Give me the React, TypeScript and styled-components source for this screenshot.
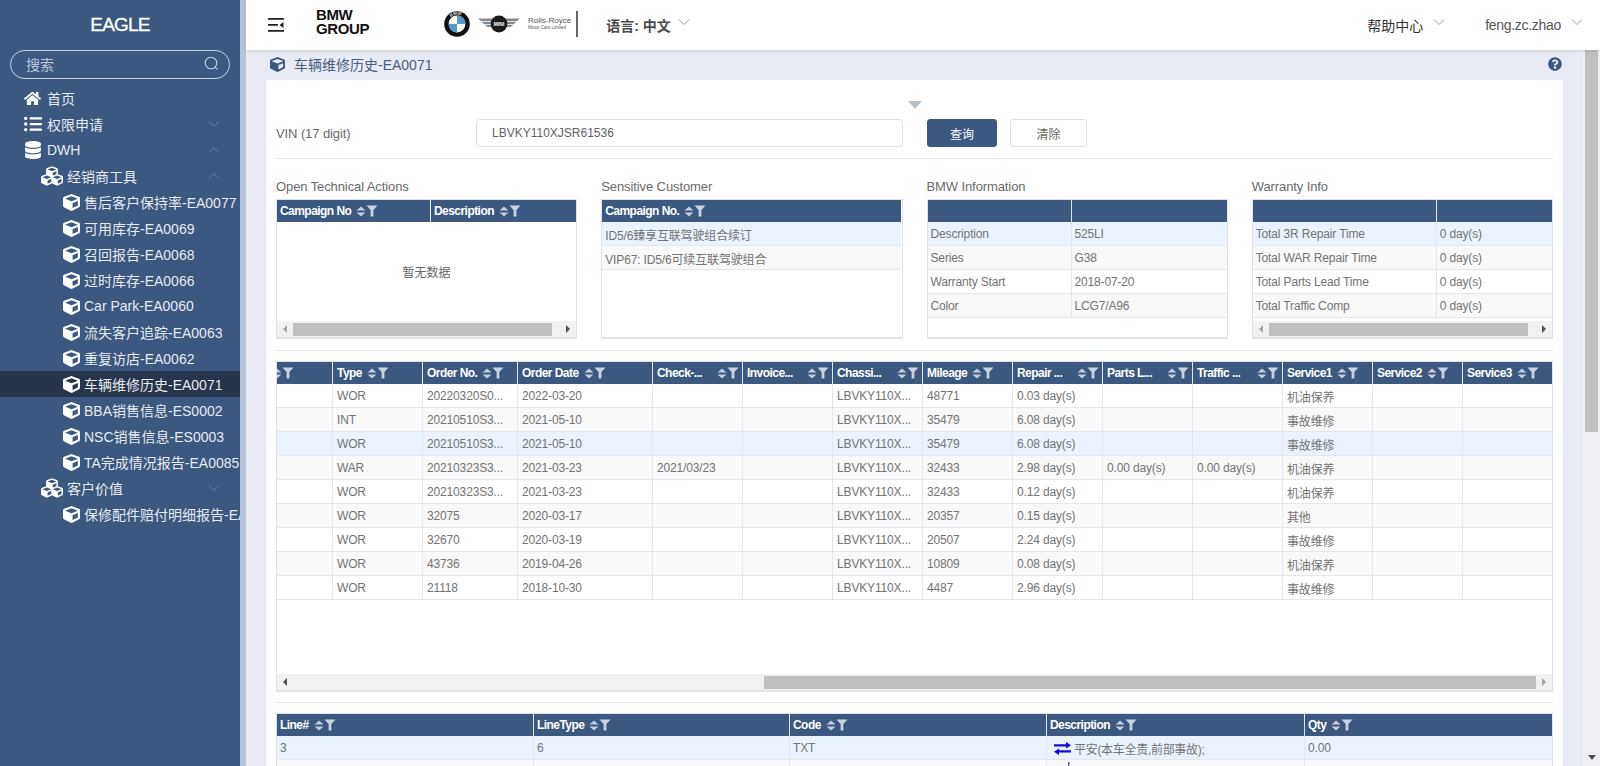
import React from "react";
import styled, { createGlobalStyle } from "styled-components";
import { FaCube, FaCubes, FaDatabase, FaHome, FaListUl, FaQuestionCircle } from "react-icons/fa";

const GlobalStyle = createGlobalStyle`
  * { box-sizing: border-box; }
  html, body { margin: 0; padding: 0; height: 100%; overflow: hidden; }
  body {
    font-family: "Liberation Sans", "Noto Sans CJK SC", sans-serif;
    font-size: 12px;
    color: #666;
  }
`;

const Page = styled.div`
  display: flex;
  width: 1600px;
  height: 766px;
  overflow: hidden;
  background: #e8ebf3;
`;

/* Sidebar */
const Sidebar = styled.aside`
  flex: 0 0 246px;
  height: 100%;
  background: #3c5780;
  border-right: 6px solid #b6c2d5;
  overflow: hidden;
`;

const Logo = styled.div`
  height: 50px;
  display: flex;
  align-items: center;
  justify-content: center;
  color: #fff;
  font-size: 19px;
  letter-spacing: -0.8px;
  -webkit-text-stroke: 0.3px #fff;
`;

const SearchBox = styled.div`
  display: flex;
  align-items: center;
  justify-content: space-between;
  height: 29px;
  margin: 0 10px 6px;
  padding: 0 10px 2px 15px;
  border: 1px solid #c8d1de;
  border-radius: 15px;
  color: #bcc7d8;
  font-size: 14px;
`;

const MenuRow = styled.div<{ $level: number; $active?: boolean }>`
  display: flex;
  align-items: center;
  height: 26px;
  padding-left: ${(p) => [24, 41, 63][p.$level]}px;
  background: ${(p) => (p.$active ? "#28344a" : "transparent")};
  color: #e6eaf1;
  font-size: 14px;
  white-space: nowrap;
  position: relative;
`;

const MenuIcon = styled.span<{ $level: number }>`
  flex: 0 0 ${(p) => [23, 26, 21][p.$level]}px;
  display: flex;
  align-items: center;
  color: #fff;
`;

const MenuCaret = styled.svg`
  position: absolute;
  left: 208px;
  top: 9px;
  width: 12px;
  height: 8px;
  fill: none;
  stroke: #6d84a6;
`;

/* Main column */
const Main = styled.div`
  flex: 1;
  min-width: 0;
  display: flex;
  flex-direction: column;
`;

const Header = styled.header`
  flex: 0 0 50px;
  display: flex;
  align-items: center;
  padding: 0 17px 0 22px;
  background: #fff;
  box-shadow: 0 1px 4px rgba(0, 0, 0, 0.12);
  position: relative;
  z-index: 1;
  color: #555;
  font-size: 14px;
`;

const GroupMark = styled.div`
  margin: -6px 0 0 32px;
  color: #111;
  font-size: 15px;
  font-weight: 700;
  line-height: 14px;
  letter-spacing: -0.4px;
`;

const Brands = styled.div`
  display: flex;
  align-items: center;
  gap: 8px;
  margin-left: 75px;
  margin-top: -3px;
`;

const Rolls = styled.div`
  color: #555;
  font-size: 8px;
  line-height: 7px;
  white-space: nowrap;
  small {
    display: block;
    font-size: 4.5px;
  }
`;

const BrandBar = styled.div`
  width: 2px;
  height: 26px;
  margin: -3px 0 0 5px;
  background: #666;
`;

const HeadItem = styled.div<{ $strong?: boolean; $left: number }>`
  display: flex;
  align-items: center;
  margin-left: ${(p) => p.$left}px;
  font-weight: ${(p) => (p.$strong ? 700 : 400)};
  color: ${(p) => (p.$strong ? "#4a4a4a" : "#555")};
  svg {
    width: 12px;
    height: 8px;
    margin: -6px 0 0 ${(p) => (p.$strong ? 7 : 10)}px;
    fill: none;
    stroke: #999;
  }
`;

const HelpItem = styled(HeadItem)`
  font-weight: 400;
  color: #333;
`;

const UserItem = styled(HeadItem)`
  letter-spacing: -0.3px;
`;

const Spacer = styled.div`
  flex: 1;
`;

const Body = styled.div`
  flex: 1;
  min-height: 0;
  display: flex;
`;

const Content = styled.div`
  flex: 1;
  min-width: 0;
  padding: 0 20px;
`;

const Crumb = styled.div`
  display: flex;
  align-items: center;
  height: 30px;
  padding: 0 0 2px 4px;
  color: #4a5d80;
  font-size: 14px;
  gap: 9px;
  svg {
    color: #3c5780;
  }
`;

const Help = styled.span`
  margin-left: auto;
  margin-right: 1px;
  display: flex;
  svg {
    color: #3c5780;
  }
`;

const Rail = styled.div`
  flex: 0 0 17px;
  display: flex;
  flex-direction: column;
  align-items: center;
  padding-bottom: 6px;
  background: #eef0f4;
`;

const RailThumb = styled.div`
  width: 13px;
  height: 382px;
  background: #bfbfbf;
`;

const RailArrow = styled.div`
  margin-top: auto;
  border-left: 4px solid transparent;
  border-right: 4px solid transparent;
  border-top: 5px solid #505050;
`;

const Card = styled.div`
  height: 700px;
  padding: 0 10px;
  background: #fff;
  overflow: hidden;
`;

const Toggle = styled.div`
  height: 39px;
  display: flex;
  justify-content: center;
  padding-top: 21px;
`;

const ToggleMark = styled.div`
  width: 0;
  height: 0;
  border-left: 7px solid transparent;
  border-right: 7px solid transparent;
  border-top: 8px solid #b8bfca;
`;

const FormRow = styled.div`
  display: flex;
  align-items: center;
  height: 28px;
`;

const FormLabel = styled.label`
  flex: 0 0 200px;
  font-size: 13px;
  letter-spacing: -0.1px;
  color: #6a6a6a;
`;

const VinInput = styled.div`
  flex: 0 0 427px;
  height: 28px;
  display: flex;
  align-items: center;
  padding-left: 15px;
  border: 1px solid #dcdfe6;
  border-radius: 4px;
  color: #606266;
`;

const Btn = styled.button<{ $primary?: boolean }>`
  width: ${(p) => (p.$primary ? 70 : 77)}px;
  height: 28px;
  margin-left: ${(p) => (p.$primary ? 24 : 13)}px;
  padding: 0;
  border: 1px solid ${(p) => (p.$primary ? "#3c5780" : "#dcdfe6")};
  border-radius: 3px;
  background: ${(p) => (p.$primary ? "#3c5780" : "#fff")};
  color: ${(p) => (p.$primary ? "#fff" : "#666")};
  font: inherit;
`;

const Divider = styled.div<{ $top: number; $bottom: number }>`
  height: 1px;
  margin: ${(p) => p.$top}px 0 ${(p) => p.$bottom}px;
  background: #e4e6ea;
`;

const PanelGrid = styled.div`
  display: grid;
  grid-template-columns: repeat(4, 301.25px);
  column-gap: 24px;
`;

const PanelTitle = styled.div`
  height: 16px;
  margin-bottom: 4px;
  line-height: 16px;
  font-size: 13px;
  letter-spacing: -0.1px;
  color: #6a6a6a;
`;

const Frame = styled.div<{ $height: number }>`
  display: flex;
  flex-direction: column;
  height: ${(p) => p.$height}px;
  border: 1px solid #dfe3ea;
  border-bottom-width: 2px;
  overflow: hidden;
`;

const FrameBody = styled.div`
  flex: 1;
  min-height: 0;
  overflow: hidden;
`;

const Empty = styled.div`
  flex: 1;
  display: flex;
  align-items: center;
  justify-content: center;
  color: #666;
`;

const Grid = styled.table<{ $width: number; $offset?: number; $pad?: number }>`
  width: ${(p) => p.$width}px;
  margin-left: ${(p) => p.$offset || 0}px;
  table-layout: fixed;
  border-collapse: separate;
  border-spacing: 0;
  & th,
  & td {
    padding-left: ${(p) => p.$pad || 3}px;
  }
`;

const Th = styled.th`
  height: 22px;
  padding: 0 3px;
  background: #3c5780;
  border-left: 1px solid #dfe3ea;
  &:first-child {
    border-left: 0;
  }
  color: #fff;
  text-align: left;
  font-weight: 700;
  letter-spacing: -0.55px;
  white-space: nowrap;
  overflow: hidden;
`;

const ThInner = styled.div<{ $indent?: number }>`
  display: flex;
  align-items: center;
  padding-left: ${(p) => p.$indent || 0}px;
`;

const ThLabel = styled.span<{ $fill?: boolean }>`
  flex: ${(p) => (p.$fill ? 1 : "0 0 auto")};
  margin-right: 5px;
`;

const SortIcon = styled.svg`
  flex: 0 0 10px;
  width: 10px;
  height: 11px;
  fill: #c3ccd9;
`;

const FilterIcon = styled.svg`
  flex: 0 0 12px;
  width: 12px;
  height: 12px;
  fill: #cbd3df;
`;

const Tr = styled.tr<{ $active?: boolean }>`
  background: ${(p) => (p.$active ? "#eaf3fd" : "#fff")};
  &:nth-child(even) {
    background: ${(p) => (p.$active ? "#eaf3fd" : "#f9f9f9")};
  }
`;

const Td = styled.td`
  height: 24px;
  padding: 1px 3px 0;
  border-left: 1px solid #e3e6ec;
  border-bottom: 1px solid #e3e6ec;
  &:first-child {
    border-left: 0;
  }
  color: #737373;
  letter-spacing: -0.15px;
  white-space: nowrap;
  overflow: hidden;
`;

const DescCell = styled.span`
  display: flex;
  align-items: center;
  gap: 3px;
  padding-left: 4px;
  letter-spacing: -0.3px;
`;

const PlusWrap = styled.span`
  display: flex;
  padding: 0 0 8px 6px;
`;

const ScrollBar = styled.div`
  flex: 0 0 16px;
  display: flex;
  align-items: center;
  background: #f1f1f1;
`;

const ScrollArrow = styled.div<{ $dir: "left" | "right"; $dark?: boolean }>`
  flex: 0 0 16px;
  display: flex;
  justify-content: center;
  margin-left: ${(p) => (p.$dir === "right" ? "auto" : 0)};
  &::before {
    content: "";
    border-top: 4px solid transparent;
    border-bottom: 4px solid transparent;
    ${(p) => (p.$dir === "left" ? "border-right" : "border-left")}: 4px solid ${(p) => (p.$dark ? "#505050" : "#a3a3a3")};
  }
`;

const ScrollThumb = styled.div<{ $left: number; $width: number }>`
  flex: 0 0 ${(p) => p.$width}px;
  height: 13px;
  margin-left: ${(p) => p.$left}px;
  background: #bfbfbf;
`;

const Caret = () => (
  <svg viewBox="0 0 12 8">
    <path d="M1 1.5 6 6.5 11 1.5" />
  </svg>
);

const SideCaret = ({ up }: { up?: boolean }) => (
  <MenuCaret viewBox="0 0 12 8">
    <path d={up ? "M1 6.5 6 1.5 11 6.5" : "M1 1.5 6 6.5 11 1.5"} />
  </MenuCaret>
);

const ColHead = ({ label, fill, indent }: { label?: string; fill?: boolean; indent?: number }) => (
  <ThInner $indent={indent}>
    {label && <ThLabel $fill={fill}>{label}</ThLabel>}
    <SortIcon viewBox="0 0 10 11">
      <path d="M5 0.5 9.5 4.6H0.5ZM5 10.5 0.5 6.4H9.5Z" />
    </SortIcon>
    <FilterIcon viewBox="0 0 12 12">
      <path d="M0.5 0.5H11.5L7.4 5V11.5H4.6V5Z" />
    </FilterIcon>
  </ThInner>
);

const BmwLogo = () => (
  <svg width="26" height="26" viewBox="0 0 26 26">
    <circle cx="13" cy="13" r="12.8" fill="#111" />
    <path id="bmwRing" d="M3.8 13a9.2 9.2 0 0 1 18.4 0" fill="none" />
    <text fontSize="4.5" fontWeight="700" fill="#ddd" fontFamily="Liberation Sans">
      <textPath href="#bmwRing" startOffset="26%">BMW</textPath>
    </text>
    <circle cx="13" cy="13" r="8.4" fill="#fff" />
    <path d="M13 13V4.6A8.4 8.4 0 0 1 21.4 13ZM13 13V21.4A8.4 8.4 0 0 1 4.6 13Z" fill="#4f9ad4" />
  </svg>
);

const MiniLogo = () => (
  <svg width="42" height="18" viewBox="0 0 42 18">
    <path d="M0 3.5H15V6H3ZM3.5 6.8H15V9H6ZM6.5 9.8H15V12H9.5ZM42 3.5H27V6H39ZM38.5 6.8H27V9H36ZM35.5 9.8H27V12H32.5Z" fill="#85898e" />
    <circle cx="21" cy="9" r="8.4" fill="#1b1b1b" />
    <text x="21" y="10.8" textAnchor="middle" fontSize="5" fontWeight="700" fill="#fff" fontFamily="Liberation Sans">MINI</text>
  </svg>
);

const SwapIcon = () => (
  <svg width="17" height="13" viewBox="0 0 17 13">
    <path d="M0 2.2H12V0L17 3.3 12 6.4V4.4H0ZM17 8.2H5V6.4L0 9.7 5 13V10.4H17Z" fill="#0c0ce0" />
  </svg>
);

const PlusIcon = () => (
  <svg width="17" height="15" viewBox="0 0 17 15">
    <path d="M8 1H9.5V14H8ZM2 7H15V8.4H2Z" fill="#6a3fc0" />
  </svg>
);

type Item = { level: number; text: string; icon: React.ReactNode; caret?: "up" | "down"; active?: boolean };

const cube = <FaCube size={17} />;
const cubes = <FaCubes size={22} />;

const menu: Item[] = [
  { level: 0, text: "首页", icon: <FaHome size={17} /> },
  { level: 0, text: "权限申请", icon: <FaListUl size={18} />, caret: "down" },
  { level: 0, text: "DWH", icon: <FaDatabase size={18} />, caret: "up" },
  { level: 1, text: "经销商工具", icon: cubes, caret: "up" },
  { level: 2, text: "售后客户保持率-EA0077", icon: cube },
  { level: 2, text: "可用库存-EA0069", icon: cube },
  { level: 2, text: "召回报告-EA0068", icon: cube },
  { level: 2, text: "过时库存-EA0066", icon: cube },
  { level: 2, text: "Car Park-EA0060", icon: cube },
  { level: 2, text: "流失客户追踪-EA0063", icon: cube },
  { level: 2, text: "重复访店-EA0062", icon: cube },
  { level: 2, text: "车辆维修历史-EA0071", icon: cube, active: true },
  { level: 2, text: "BBA销售信息-ES0002", icon: cube },
  { level: 2, text: "NSC销售信息-ES0003", icon: cube },
  { level: 2, text: "TA完成情况报告-EA0085", icon: cube },
  { level: 1, text: "客户价值", icon: cubes, caret: "down" },
  { level: 2, text: "保修配件赔付明细报告-EA0086", icon: cube },
];

const bmwInfo = [
  ["Description", "525LI"],
  ["Series", "G38"],
  ["Warranty Start", "2018-07-20"],
  ["Color", "LCG7/A96"],
];

const warranty = [
  ["Total 3R Repair Time", "0 day(s)"],
  ["Total WAR Repair Time", "0 day(s)"],
  ["Total Parts Lead Time", "0 day(s)"],
  ["Total Traffic Comp", "0 day(s)"],
];

const historyCols: { label?: string; width: number; fill?: boolean; indent?: number }[] = [
  { width: 90, indent: 26 },
  { label: "Type", width: 90 },
  { label: "Order No.", width: 95 },
  { label: "Order Date", width: 135 },
  { label: "Check-...", width: 90, fill: true },
  { label: "Invoice...", width: 90, fill: true },
  { label: "Chassi...", width: 90, fill: true },
  { label: "Mileage", width: 90 },
  { label: "Repair ...", width: 90, fill: true },
  { label: "Parts L...", width: 90, fill: true },
  { label: "Traffic ...", width: 90, fill: true },
  { label: "Service1", width: 90 },
  { label: "Service2", width: 90 },
  { label: "Service3", width: 90 },
];

const chassis = "LBVKY110X...";

const history: string[][] = [
  ["WOR", "20220320S0...", "2022-03-20", "", "", chassis, "48771", "0.03 day(s)", "", "", "机油保养"],
  ["INT", "20210510S3...", "2021-05-10", "", "", chassis, "35479", "6.08 day(s)", "", "", "事故维修"],
  ["WOR", "20210510S3...", "2021-05-10", "", "", chassis, "35479", "6.08 day(s)", "", "", "事故维修"],
  ["WAR", "20210323S3...", "2021-03-23", "2021/03/23", "", chassis, "32433", "2.98 day(s)", "0.00 day(s)", "0.00 day(s)", "机油保养"],
  ["WOR", "20210323S3...", "2021-03-23", "", "", chassis, "32433", "0.12 day(s)", "", "", "机油保养"],
  ["WOR", "32075", "2020-03-17", "", "", chassis, "20357", "0.15 day(s)", "", "", "其他"],
  ["WOR", "32670", "2020-03-19", "", "", chassis, "20507", "2.24 day(s)", "", "", "事故维修"],
  ["WOR", "43736", "2019-04-26", "", "", chassis, "10809", "0.08 day(s)", "", "", "机油保养"],
  ["WOR", "21118", "2018-10-30", "", "", chassis, "4487", "2.96 day(s)", "", "", "事故维修"],
];

const InfoTable = ({ rows, widths }: { rows: string[][]; widths: number[] }) => (
  <Grid $width={widths[0] + widths[1]}>
    <colgroup>
      <col width={widths[0]} />
      <col width={widths[1]} />
    </colgroup>
    <thead>
      <tr>
        <Th />
        <Th />
      </tr>
    </thead>
    <tbody>
      {rows.map((r, i) => (
        <Tr key={r[0]} $active={i === 0}>
          <Td>{r[0]}</Td>
          <Td>{r[1]}</Td>
        </Tr>
      ))}
    </tbody>
  </Grid>
);

export default function App() {
  return (
    <Page>
      <GlobalStyle />
      <Sidebar>
        <Logo>EAGLE</Logo>
        <SearchBox>
          <span>搜索</span>
          <svg width="15" height="15" viewBox="0 0 15 15" fill="none" stroke="#c8d1de" strokeWidth="1.1">
            <circle cx="7" cy="7" r="5.8" />
            <path d="M11.2 11.2 13.6 13.6" />
          </svg>
        </SearchBox>
        {menu.map((m) => (
          <MenuRow key={m.text} $level={m.level} $active={m.active}>
            <MenuIcon $level={m.level}>{m.icon}</MenuIcon>
            {m.text}
            {m.caret && <SideCaret up={m.caret === "up"} />}
          </MenuRow>
        ))}
      </Sidebar>

      <Main>
        <Header>
          <svg width="16" height="14" viewBox="0 0 16 14">
            <path d="M0 0H16V1.8H0ZM0 6H10V7.8H0ZM0 12H16V13.8H0ZM15.5 4V10L11.5 7Z" fill="#222" />
          </svg>
          <GroupMark>
            BMW
            <br />
            GROUP
          </GroupMark>
          <Brands>
            <BmwLogo />
            <MiniLogo />
            <Rolls>
              Rolls-Royce
              <small>Motor Cars Limited</small>
            </Rolls>
          </Brands>
          <BrandBar />
          <HeadItem $strong $left={28}>
            语言: 中文
            <Caret />
          </HeadItem>
          <Spacer />
          <HelpItem $left={0}>
            帮助中心
            <Caret />
          </HelpItem>
          <UserItem $left={40}>
            feng.zc.zhao
            <Caret />
          </UserItem>
        </Header>

        <Body>
          <Content>
            <Crumb>
              <FaCube size={15} />
              车辆维修历史-EA0071
              <Help>
                <FaQuestionCircle size={14} />
              </Help>
            </Crumb>
            <Card>
              <Toggle>
                <ToggleMark />
              </Toggle>
              <FormRow>
                <FormLabel>VIN (17 digit)</FormLabel>
                <VinInput>LBVKY110XJSR61536</VinInput>
                <Btn $primary>查询</Btn>
                <Btn>清除</Btn>
              </FormRow>
              <Divider $top={11} $bottom={20} />

              <PanelGrid>
                <div>
                  <PanelTitle>Open Technical Actions</PanelTitle>
                  <Frame $height={140}>
                    <Grid $width={299}>
                      <colgroup>
                        <col width={153} />
                        <col width={146} />
                      </colgroup>
                      <thead>
                        <tr>
                          <Th><ColHead label="Campaign No" /></Th>
                          <Th><ColHead label="Description" /></Th>
                        </tr>
                      </thead>
                    </Grid>
                    <Empty>暂无数据</Empty>
                    <ScrollBar>
                      <ScrollArrow $dir="left" />
                      <ScrollThumb $left={0} $width={259} />
                      <ScrollArrow $dir="right" $dark />
                    </ScrollBar>
                  </Frame>
                </div>

                <div>
                  <PanelTitle>Sensitive Customer</PanelTitle>
                  <Frame $height={140}>
                    <Grid $width={299}>
                      <thead>
                        <tr>
                          <Th><ColHead label="Campaign No." /></Th>
                        </tr>
                      </thead>
                      <tbody>
                        <Tr $active>
                          <Td>ID5/6臻享互联驾驶组合续订</Td>
                        </Tr>
                        <Tr>
                          <Td>VIP67: ID5/6可续互联驾驶组合</Td>
                        </Tr>
                      </tbody>
                    </Grid>
                  </Frame>
                </div>

                <div>
                  <PanelTitle>BMW Information</PanelTitle>
                  <Frame $height={140}>
                    <InfoTable rows={bmwInfo} widths={[143, 156]} />
                  </Frame>
                </div>

                <div>
                  <PanelTitle>Warranty Info</PanelTitle>
                  <Frame $height={140}>
                    <FrameBody>
                      <InfoTable rows={warranty} widths={[183, 161]} />
                    </FrameBody>
                    <ScrollBar>
                      <ScrollArrow $dir="left" />
                      <ScrollThumb $left={0} $width={259} />
                      <ScrollArrow $dir="right" $dark />
                    </ScrollBar>
                  </Frame>
                </div>
              </PanelGrid>

              <Divider $top={11} $bottom={10} />

              <Frame $height={331}>
                <FrameBody>
                  <Grid $width={1310} $offset={-35} $pad={4}>
                    <colgroup>
                      {historyCols.map((c, i) => (
                        <col key={i} width={c.width} />
                      ))}
                    </colgroup>
                    <thead>
                      <tr>
                        {historyCols.map((c, i) => (
                          <Th key={i}>
                            <ColHead label={c.label} fill={c.fill} indent={c.indent} />
                          </Th>
                        ))}
                      </tr>
                    </thead>
                    <tbody>
                      {history.map((row, i) => (
                        <Tr key={i} $active={i === 2}>
                          <Td />
                          {row.map((cell, j) => (
                            <Td key={j}>{cell}</Td>
                          ))}
                          <Td />
                          <Td />
                        </Tr>
                      ))}
                    </tbody>
                  </Grid>
                </FrameBody>
                <ScrollBar>
                  <ScrollArrow $dir="left" $dark />
                  <ScrollThumb $left={471} $width={772} />
                  <ScrollArrow $dir="right" />
                </ScrollBar>
              </Frame>

              <Divider $top={10} $bottom={10} />

              <Frame $height={120}>
                <Grid $width={1275}>
                  <colgroup>
                    <col width={256} />
                    <col width={256} />
                    <col width={257} />
                    <col width={258} />
                    <col width={248} />
                  </colgroup>
                  <thead>
                    <tr>
                      <Th><ColHead label="Line#" /></Th>
                      <Th><ColHead label="LineType" /></Th>
                      <Th><ColHead label="Code" /></Th>
                      <Th><ColHead label="Description" /></Th>
                      <Th><ColHead label="Qty" /></Th>
                    </tr>
                  </thead>
                  <tbody>
                    <Tr $active>
                      <Td>3</Td>
                      <Td>6</Td>
                      <Td>TXT</Td>
                      <Td>
                        <DescCell>
                          <SwapIcon />
                          平安(本车全责,前部事故);
                        </DescCell>
                      </Td>
                      <Td>0.00</Td>
                    </Tr>
                    <Tr>
                      <Td />
                      <Td />
                      <Td />
                      <Td>
                        <DescCell>
                          <PlusWrap>
                            <PlusIcon />
                          </PlusWrap>
                        </DescCell>
                      </Td>
                      <Td />
                    </Tr>
                  </tbody>
                </Grid>
              </Frame>
            </Card>
          </Content>
          <Rail>
            <RailThumb />
            <RailArrow />
          </Rail>
        </Body>
      </Main>
    </Page>
  );
}
